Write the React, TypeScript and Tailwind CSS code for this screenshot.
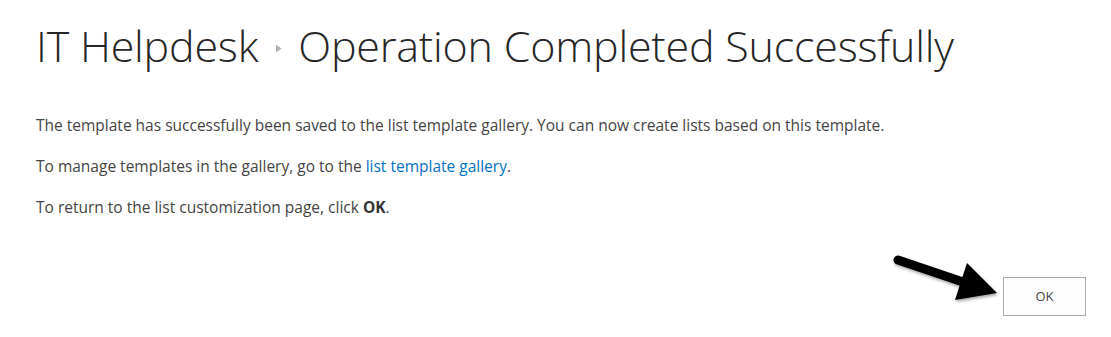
export default function App() {
  return (
    <main className="relative w-[1111px] h-[337px] bg-white overflow-hidden" style={{ fontFamily: '"Open Sans", "Liberation Sans", sans-serif' }}>
      <div className="pl-[36px] pt-[18px]">
        <h1 className="flex items-center text-[43px] font-light leading-[56px] text-[#262626] tracking-[-0.2px]">
          <span>IT Helpdesk</span>
          <svg className="ml-[17px] mr-[16px] mt-[4px]" width="7" height="9" viewBox="0 0 7 9">
            <path d="M1 0.5 L6.5 4.5 L1 8.5 Z" fill="#b1b1b1" />
          </svg>
          <span>Operation Completed Successfully</span>
        </h1>

        <div className="mt-[41px] flex flex-col gap-[21px] text-[15.5px] leading-[20px] text-[#444444]">
          <p>The template has successfully been saved to the list template gallery. You can now create lists based on this template.</p>
          <p>
            To manage templates in the gallery, go to the{" "}
            <a href="#" className="text-[#0072c6]">list template gallery</a>.
          </p>
          <p>
            To return to the list customization page, click <b className="font-bold text-[#333]">OK</b>.
          </p>
        </div>
      </div>

      <div className="flex justify-end pr-[25px] mt-[60px]">
        <button className="w-[83px] h-[39px] border border-[#ababab] bg-[#fdfdfd] text-[13px] text-[#444444]">
          OK
        </button>
      </div>

      {/* annotation arrow */}
      <svg className="absolute left-[885px] top-[248px]" width="120" height="65" viewBox="0 0 120 65">
        <defs>
          <filter id="sh" x="-20%" y="-20%" width="140%" height="140%">
            <feDropShadow dx="1" dy="2" stdDeviation="1.5" floodColor="#000" floodOpacity="0.35" />
          </filter>
        </defs>
        <g filter="url(#sh)">
          <line x1="13" y1="12" x2="78" y2="34" stroke="#000" strokeWidth="9" strokeLinecap="round" />
          <path d="M82 15 L112 45 L70 52 Z" fill="#000" />
        </g>
      </svg>
    </main>
  );
}
